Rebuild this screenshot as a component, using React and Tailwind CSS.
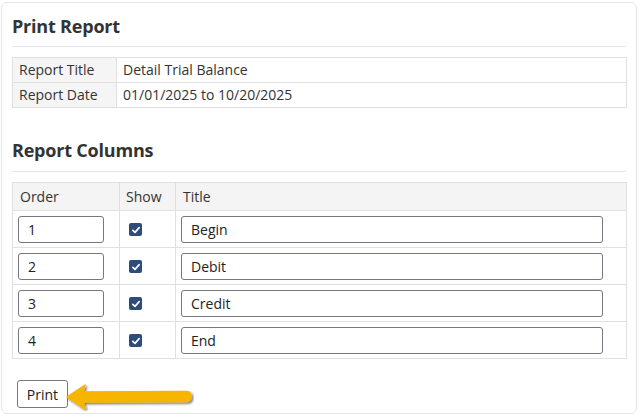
import React from "react";

const columns = [
  { order: "1", title: "Begin" },
  { order: "2", title: "Debit" },
  { order: "3", title: "Credit" },
  { order: "4", title: "End" },
];

function Check() {
  return (
    <span className="inline-flex h-[13px] w-[13px] items-center justify-center rounded-[2px] bg-[#2f4b7c]">
      <svg viewBox="0 0 12 12" className="h-[10px] w-[10px]">
        <path d="M2.2 6.4 L4.8 8.8 L9.8 3.2" fill="none" stroke="#fff" strokeWidth="2" strokeLinecap="round" strokeLinejoin="round" />
      </svg>
    </span>
  );
}

function Arrow() {
  return (
    <svg width="128" height="34" viewBox="0 0 128 34" className="-ml-[2px]">
      <defs>
        <filter id="sh" x="-10%" y="-40%" width="130%" height="200%">
          <feDropShadow dx="1.5" dy="1.5" stdDeviation="0.8" floodColor="#000" floodOpacity="0.55" />
        </filter>
      </defs>
      <path
        d="M1 20 L19 8 L17 15 L120 14.5 Q125 14.5 125 19.5 Q125 24.5 120 24.5 L17 25 L19 32 Z"
        fill="#f7b500"
        stroke="#f7b500"
        strokeWidth="1.5"
        strokeLinejoin="round"
        filter="url(#sh)"
      />
    </svg>
  );
}

export default function App() {
  return (
    <div className="h-[417px] w-[640px] bg-white pl-[1px] pt-[2px] font-['Open_Sans',sans-serif] text-[#333]">
      <div className="h-[412px] w-[636px] rounded-[6px] border border-[#e3e7ec] px-[10px] pt-[11px]">
        {/* Print Report */}
        <h2 className="text-[18px] font-bold leading-[24px] tracking-[-0.2px] text-[#333]">Print Report</h2>
        <div className="mt-[8px] border-t border-[#e3e7ec]" />
        <table className="mt-[10px] w-[615px] border-collapse text-[14px]">
          <tbody>
            <tr className="h-[25px]">
              <td className="w-[104px] border border-[#e0e0e0] bg-[#f5f5f5] pl-[6px] leading-[24px]">Report Title</td>
              <td className="border border-[#e0e0e0] pl-[6px] leading-[24px]">Detail Trial Balance</td>
            </tr>
            <tr className="h-[25px]">
              <td className="border border-[#e0e0e0] bg-[#f5f5f5] pl-[6px] leading-[24px]">Report Date</td>
              <td className="border border-[#e0e0e0] pl-[6px] leading-[24px]">01/01/2025 to 10/20/2025</td>
            </tr>
          </tbody>
        </table>

        {/* Report Columns */}
        <h2 className="mt-[30px] text-[18px] font-bold leading-[24px] tracking-[-0.2px] text-[#333]">Report Columns</h2>
        <div className="mt-[9px] border-t border-[#e3e7ec]" />
        <table className="mt-[10px] w-[615px] border-collapse text-[14px]">
          <thead>
            <tr className="h-[28px] bg-[#f4f4f4]">
              <th className="w-[107px] border border-[#e0e0e0] pl-[7px] text-left font-normal">Order</th>
              <th className="w-[56px] border border-[#e0e0e0] pl-[6px] text-left font-normal">Show</th>
              <th className="border border-[#e0e0e0] pl-[7px] text-left font-normal">Title</th>
            </tr>
          </thead>
          <tbody>
            {columns.map((c) => (
              <tr key={c.order} className="h-[37px]">
                <td className="border border-[#e0e0e0] pl-[5px]">
                  <input
                    defaultValue={c.order}
                    className="block h-[27px] w-[86px] rounded-[3px] border border-[#767685] px-[9px] text-[14px] text-[#222] outline-none"
                  />
                </td>
                <td className="border border-[#e0e0e0] pl-[9px]">
                  <div className="flex items-center pt-[1px]">
                    <Check />
                  </div>
                </td>
                <td className="border border-[#e0e0e0] pl-[5px]">
                  <input
                    defaultValue={c.title}
                    className="block h-[27px] w-[422px] rounded-[3px] border border-[#767685] px-[9px] text-[14px] text-[#222] outline-none"
                  />
                </td>
              </tr>
            ))}
          </tbody>
        </table>

        <div className="mt-[18px] flex items-center pl-[5px]">
          <button className="h-[28px] w-[51px] rounded-[3px] border border-[#767685] bg-white text-[14px] text-[#222]">
            Print
          </button>
          <Arrow />
        </div>
      </div>
    </div>
  );
}
